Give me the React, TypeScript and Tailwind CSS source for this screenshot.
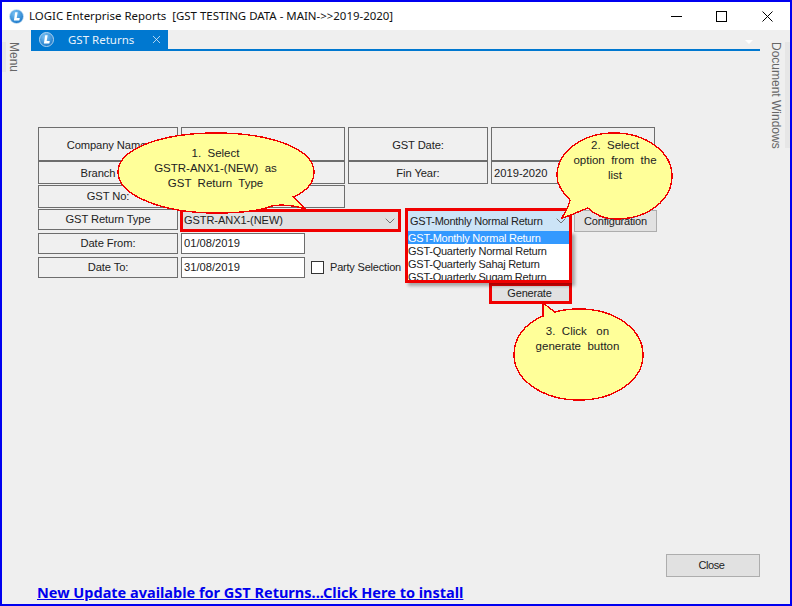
import React from "react";
import { ChevronDown, X } from "lucide-react";

const FONT = "font-['Liberation_Sans',Arial,sans-serif]";
const UI_TEXT = "text-[11px] tracking-[-0.2px] text-[#222]";

const Logo = ({ size }: { size: number }) => (
  <svg width={size} height={size} viewBox="0 0 16 16">
    <defs>
      <radialGradient id="logoBlue" cx="0.4" cy="0.3" r="0.8">
        <stop offset="0" stopColor="#7cc4f5" />
        <stop offset="1" stopColor="#0f6fc4" />
      </radialGradient>
    </defs>
    <circle cx="8" cy="8" r="7.5" fill="url(#logoBlue)" stroke="#dcecf8" strokeWidth="0.8" />
    <path d="M6.6 3.5h2.6l-1 6.2h3.3l-.5 2.6H5.2z" fill="#fff" />
  </svg>
);

const Label = ({ text, h, low }: { text: string; h: string; low?: boolean }) => (
  <div className={`${h} ${low ? "pt-[2px]" : ""} text-[11.2px] tracking-[-0.1px] text-[#222] w-[140px] shrink-0 border border-[#6d6d6d] bg-[#f0f0f0] flex items-center justify-center`}>
    {text}
  </div>
);

const Value = ({ text, h, w, white, low }: { text?: string; h: string; w: string; white?: boolean; low?: boolean }) => (
  <div className={`${h} ${w} ${low ? "pt-[2px]" : ""} shrink-0 border border-[#6d6d6d] ${white ? "bg-white" : "bg-[#f0f0f0]"} flex items-center pl-[2px] text-[11.2px] text-[#222]`}>
    {text}
  </div>
);

// speech bubble, the text sits on top of the drawn shape
const Callout = ({ className, w, h, d, lines, textClass }: { className: string; w: number; h: number; d: string; lines: string[]; textClass: string }) => (
  <div className={`absolute ${className}`} style={{ width: w, height: h }}>
    <svg width={w} height={h} viewBox={`0 0 ${w} ${h}`} className="absolute inset-0">
      <path d={d} fill="#ffff99" stroke="#f00000" strokeWidth="1.4" shapeRendering="crispEdges" />
    </svg>
    <div className={`absolute text-center text-[11.5px] leading-[15px] text-[#222] whitespace-pre ${textClass}`}>
      {lines.map((l) => (
        <div key={l}>{l}</div>
      ))}
    </div>
  </div>
);

export default function App() {
  return (
    <div className={`${FONT} w-[792px] h-[606px] overflow-hidden border-2 border-[#0000f0] bg-[#efefef] flex flex-col`}>
      {/* title bar */}
      <div className="h-[28px] bg-white flex items-center shrink-0 text-[#111]">
        <div className="ml-[7px]"><Logo size={15} /></div>
        <span className="ml-[5px] whitespace-pre font-['Noto_Sans',sans-serif] text-[11.45px]">LOGIC Enterprise Reports  [GST TESTING DATA - MAIN-&gt;&gt;2019-2020]</span>
        <div className="ml-auto flex items-center">
          <svg width="11" height="11" viewBox="0 0 11 11" className="mr-[34px]">
            <path d="M0 5.5h11" stroke="#000" strokeWidth="1" />
          </svg>
          <svg width="11" height="11" viewBox="0 0 11 11" className="mr-[35px]">
            <rect x="0.5" y="0.5" width="10" height="10" fill="none" stroke="#000" strokeWidth="1" />
          </svg>
          <svg width="11" height="11" viewBox="0 0 11 11" className="mr-[17px]">
            <path d="M0.5 0.5l10 10M10.5 0.5l-10 10" stroke="#000" strokeWidth="1" />
          </svg>
        </div>
      </div>

      <div className="flex flex-1 min-h-0">
        {/* left rail */}
        <div className="w-[29px] shrink-0 pt-[12px] flex items-start">
          <div className="w-[4px] h-[30px] bg-[#e6e6e6]" />
          <div className="ml-[2px] [writing-mode:vertical-rl] text-[12px] text-[#666] h-[30px] w-[12px] leading-[12px]">Menu</div>
        </div>

        {/* main column */}
        <div className="relative w-[729px] shrink-0 flex flex-col flex-1 min-h-0">
          <div className="h-[21px] border-b-[2px] border-[#0078d0] shrink-0 flex items-start">
            <div className="w-[137px] h-[19px] bg-[#0078d0] flex items-center font-['Noto_Sans',sans-serif] text-[11.5px] whitespace-nowrap">
              <div className="ml-[8px]"><Logo size={15} /></div>
              <span className="ml-[14px] text-[#e8f2fb]">GST Returns</span>
              <X size={13} strokeWidth={1.4} className="ml-auto mr-[5px] text-[#e8f2fb]" />
            </div>
            <svg width="8" height="4" viewBox="0 0 8 4" className="ml-auto mr-[7px] mt-[10px]">
              <path d="M0 0h8L4 4z" fill="#fff" />
            </svg>
          </div>

          {/* form */}
          <div className="pl-[7px] pt-[76px] flex flex-col">
            <div className="flex h-[34px]">
              <Label text="Company Name:" h="h-[34px]" low />
              <div className="ml-[3px]"><Value h="h-[34px]" w="w-[164px]" /></div>
              <div className="ml-[3px]"><Label text="GST Date:" h="h-[34px]" low /></div>
              <div className="ml-[3px]"><Value h="h-[34px]" w="w-[164px]" /></div>
            </div>
            <div className="flex h-[23px]">
              <Label text="Branch No:" h="h-[23px]" low />
              <div className="ml-[3px]"><Value h="h-[23px]" w="w-[164px]" /></div>
              <div className="ml-[3px]"><Label text="Fin Year:" h="h-[23px]" low /></div>
              <div className="ml-[3px]"><Value text="2019-2020" h="h-[23px]" w="w-[164px]" low /></div>
            </div>
            <div className="flex h-[23px] mt-[1px]">
              <Label text="GST No:" h="h-[23px]" />
              <div className="ml-[3px]"><Value h="h-[23px]" w="w-[164px]" /></div>
            </div>

            {/* return type row */}
            <div className="flex h-[24px] items-start">
              <div className="mt-[1px]"><Label text="GST Return Type" h="h-[21px]" /></div>
              <div className={`ml-[2px] mt-[1px] w-[221px] h-[23px] border-[3px] border-[#f00000] bg-[#e1e1e1] flex items-center pl-[1px] ${UI_TEXT} tracking-[-0.05px]`}>
                <span>GSTR-ANX1-(NEW)</span>
                <ChevronDown size={16} strokeWidth={1.2} className="ml-auto text-[#555]" />
              </div>
              <div className="relative ml-[4px] w-[167px]">
                <div className={`w-[167px] h-[23px] border-[3px] border-b-0 border-[#f00000] bg-[#cce4f7] flex items-center pl-[2px] whitespace-nowrap ${UI_TEXT} tracking-[-0.25px]`}>
                  <span>GST-Monthly Normal Return</span>
                  <ChevronDown size={16} strokeWidth={1.2} className="ml-auto text-[#555]" />
                </div>
                <div className={`absolute z-10 left-0 top-[23px] w-[167px] h-[52px] border-[3px] border-t-0 border-[#f00000] bg-white overflow-hidden leading-[14px] whitespace-nowrap shadow-[3px_3px_3px_rgba(0,0,0,0.3)] ${UI_TEXT} tracking-[-0.25px]`}>
                  <div className="bg-[#3399ff] text-white h-[13px]">GST-Monthly Normal Return</div>
                  <div className="h-[13px]">GST-Quarterly Normal Return</div>
                  <div className="h-[13px]">GST-Quarterly Sahaj Return</div>
                  <div className="h-[13px]">GST-Quarterly Sugam Return</div>
                </div>
              </div>
              <div className={`ml-[2px] mt-[2px] w-[83px] h-[22px] border border-[#adadad] bg-[#e1e1e1] flex items-center justify-center ${UI_TEXT}`}>Configuration</div>
            </div>

            <div className="flex h-[21px] mt-[1px]">
              <Label text="Date From:" h="h-[21px]" />
              <div className="ml-[3px]"><Value text="01/08/2019" h="h-[21px]" w="w-[124px]" white /></div>
            </div>
            <div className="flex h-[21px] mt-[3px] items-center">
              <Label text="Date To:" h="h-[21px]" />
              <div className="ml-[3px]"><Value text="31/08/2019" h="h-[21px]" w="w-[124px]" white /></div>
              <div className="ml-[6px] w-[13px] h-[13px] border border-[#333] bg-white" />
              <span className={`ml-[6px] ${UI_TEXT}`}>Party Selection</span>
            </div>
            <div className={`ml-[451px] mt-[5px] w-[83px] h-[21px] border-[3px] border-[#f00000] bg-[#e1e1e1] flex items-center justify-center pr-[2px] ${UI_TEXT}`}>Generate</div>
          </div>

          {/* footer */}
          <div className="mt-auto h-[50px] shrink-0">
            <div className="flex justify-end">
              <div className={`w-[94px] h-[23px] border border-[#adadad] bg-[#e1e1e1] flex items-center justify-center pr-[3px] ${UI_TEXT} tracking-[-0.4px]`}>Close</div>
            </div>
            <a className="block ml-[6px] mt-[6px] font-['Noto_Sans',sans-serif] font-bold text-[14.5px] leading-[18px] text-[#0000ee] underline whitespace-pre">New Update available for GST Returns...Click Here to install</a>
          </div>

          {/* callouts, positions relative to the main column */}
          <Callout
            className="z-20 left-[86px] top-[102px]"
            w={200}
            h={84}
            d="M1 40 C1 17 44 1 99 1 C154 1 197 17 197 40 C197 52 188 60 176 65 L189 77 C175 73 165 72 155 74 C140 80 120 81 99 81 C44 81 1 63 1 40 Z"
            lines={["1.  Select", "GSTR-ANX1-(NEW)  as", "GST  Return  Type"]}
            textClass="left-0 w-[197px] top-[14px]"
          />
          <Callout
            className="z-20 left-[525px] top-[102px]"
            w={118}
            h={90}
            d="M58 1 C90 1 116 20 116 44 C116 68 92 87 60 87 C50 87 40 84 32 76 C26 78 14 84 6 86 C10 78 14 72 14 68 C6 60 1 52 1 44 C1 20 26 1 58 1 Z"
            lines={["2.  Select", "option  from  the", "list"]}
            textClass="left-[1px] w-[116px] top-[6px]"
          />
          <Callout
            className="z-20 left-[481px] top-[272px]"
            w={134}
            h={100}
            d="M31 1 L43 10 C50 8 58 7 67 7 C103 7 131 27 131 53 C131 78 103 98 67 98 C31 98 2 78 2 53 C2 36 12 22 31 14 Z"
            lines={["3.  Click   on", "generate  button"]}
            textClass="left-[0px] w-[131px] top-[22px]"
          />
        </div>

        {/* right rail */}
        <div className="w-[30px] shrink-0 pt-[12px] flex items-start">
          <div className="ml-[10px] [writing-mode:vertical-rl] text-[12px] text-[#666] h-[107px] w-[12px] leading-[12px] whitespace-nowrap">Document Windows</div>
          <div className="ml-[3px] w-[5px] h-[106px] bg-[#e6e6e6]" />
        </div>
      </div>
    </div>
  );
}
